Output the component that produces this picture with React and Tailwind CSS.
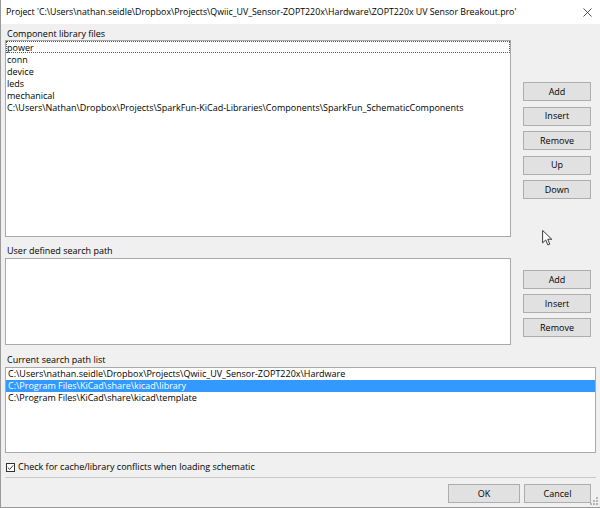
import React from "react";

const FONT = "font-['Open_Sans','Noto_Sans',sans-serif]";

function Btn({ children, w = "w-[68px]" }) {
    return <div className={w + " h-[19px] shrink-0 border border-[#adadad] bg-[#e1e1e1] flex items-center justify-center text-[9px] text-black"}>
        {children}
    </div>
}

function ListBox({ className, children }) {
    return <div className={"bg-white border border-[#a9a9a9] shrink-0 overflow-hidden " + className}>
        {children}
    </div>
}

const libFiles = [
    'power',
    'conn',
    'device',
    'leds',
    'mechanical',
    'C:\\Users\\Nathan\\Dropbox\\Projects\\SparkFun-KiCad-Libraries\\Components\\SparkFun_SchematicComponents',
];

const searchPaths = [
    'C:\\Users\\nathan.seidle\\Dropbox\\Projects\\Qwiic_UV_Sensor-ZOPT220x\\Hardware',
    'C:\\Program Files\\KiCad\\share\\kicad\\library',
    'C:\\Program Files\\KiCad\\share\\kicad\\template',
];

function Cursor() {
    return <svg className="absolute left-[541px] top-[230px]" width="11" height="16" viewBox="0 0 12 18">
        <path d="M0.5 0.5 L0.5 14.5 L4 11.2 L6.4 16.8 L8.6 15.9 L6.3 10.4 L10.8 10.4 Z"
              fill="white" stroke="#222" strokeWidth="1" strokeLinejoin="round"/>
    </svg>
}

function Grip() {
    const dots = [[6, 0], [6, 3], [3, 3], [6, 6], [3, 6], [0, 6]];
    return <svg className="absolute right-[2px] bottom-[2px]" width="8" height="8" viewBox="0 0 8 8">
        {dots.map(([x, y], i) => <rect key={i} x={x} y={y} width="2" height="2" fill="#b5b5b5"/>)}
    </svg>
}

export default function App() {
    return <div className={FONT + " relative w-[600px] h-[508px] bg-[#f0f0f0] border-l border-b border-[#9a9a9a] text-[9px] leading-[12px] text-black flex flex-col overflow-hidden"}>
        {/* title bar */}
        <div className="h-[24px] shrink-0 bg-white flex items-center pl-[5px] pr-[8px]">
            <span className="flex-1 whitespace-nowrap text-[8.8px]">
                Project 'C:\Users\nathan.seidle\Dropbox\Projects\Qwiic_UV_Sensor-ZOPT220x\Hardware\ZOPT220x UV Sensor Breakout.pro'
            </span>
            <svg width="9" height="9" viewBox="0 0 9 9">
                <path d="M0.5 0.5 L8.5 8.5 M8.5 0.5 L0.5 8.5" stroke="#222" strokeWidth="0.8"/>
            </svg>
        </div>

        <div className="flex flex-col pl-[4px] pr-[4px]">
            {/* component library files */}
            <div className="h-[12px] mt-[4px] pl-[2px]">Component library files</div>
            <div className="flex">
                <ListBox className="w-[506px] h-[197px]">
                    {libFiles.map((f, i) =>
                        <div key={i} className={'h-[12px] leading-[11px] whitespace-nowrap border ' +
                            (i === 0 ? 'border-dotted border-[#555]' : 'border-transparent')}>{f}</div>)}
                </ListBox>
                <div className="ml-[12px] pt-[42px] flex flex-col gap-[5.5px]">
                    <Btn>Add</Btn>
                    <Btn>Insert</Btn>
                    <Btn>Remove</Btn>
                    <Btn>Up</Btn>
                    <Btn>Down</Btn>
                </div>
            </div>

            {/* user defined search path */}
            <div className="h-[13px] mt-[8px] pl-[2px]">User defined search path</div>
            <div className="flex">
                <ListBox className="w-[506px] h-[87px]"/>
                <div className="ml-[12px] pt-[12px] flex flex-col gap-[5px]">
                    <Btn>Add</Btn>
                    <Btn>Insert</Btn>
                    <Btn>Remove</Btn>
                </div>
            </div>

            {/* current search path list */}
            <div className="h-[13px] mt-[9px] pl-[2px]">Current search path list</div>
            <ListBox className="w-[591px] h-[86px]">
                {searchPaths.map((p, i) =>
                    <div key={i} className={'h-[12px] pl-[2px] whitespace-nowrap ' +
                        (i === 1 ? 'bg-[#3399ff] text-white' : '')}>{p}</div>)}
            </ListBox>

            <div className="h-[12px] mt-[8px] flex items-center pl-[1px]">
                <svg width="9" height="9" viewBox="0 0 9 9" className="shrink-0">
                    <rect x="0.5" y="0.5" width="8" height="8" fill="white" stroke="#333"/>
                    <path d="M1.8 4.6 L3.7 6.4 L7.2 2.4" fill="none" stroke="#222" strokeWidth="0.9"/>
                </svg>
                <span className="ml-[3px]">Check for cache/library conflicts when loading schematic</span>
            </div>

            <div className="h-px w-[591px] mt-[4px] bg-[#c9c9c9]"/>

            <div className="flex justify-end gap-[4px] mt-[6px] w-[591px] pr-[5px]">
                <Btn w="w-[72px]">OK</Btn>
                <Btn w="w-[67px]">Cancel</Btn>
            </div>
        </div>

        <Cursor/>
        <Grip/>
    </div>
}
